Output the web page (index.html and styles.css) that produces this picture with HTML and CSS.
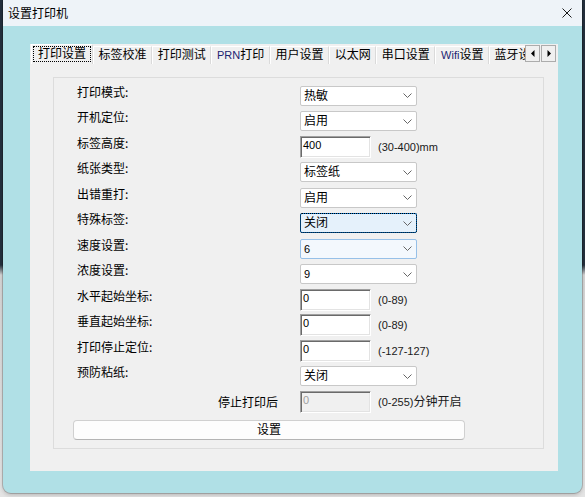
FILE: index.html
```html
<!DOCTYPE html>
<html lang="zh-CN">
<head>
<meta charset="utf-8">
<title>设置打印机</title>
<link rel="stylesheet" href="styles.css">
</head>
<body>
<div class="window">
  <div class="titlebar">
    <span class="title">设置打印机</span>
    <svg class="close" width="10" height="10" viewBox="0 0 10 10"><path d="M0.5 0.5L9.5 9.5M9.5 0.5L0.5 9.5" stroke="#1a1a1a" stroke-width="1" fill="none"/></svg>
  </div>
  <div class="client">
    <div class="tabctl">
      <div class="tabstrip">
        <div class="tabs">
          <div class="tab active"><span class="focus">打印设置</span></div>
          <div class="tab">标签校准</div>
          <div class="tab">打印测试</div>
          <div class="tab"><span class="lat">PRN</span>打印</div>
          <div class="tab">用户设置</div>
          <div class="tab">以太网</div>
          <div class="tab">串口设置</div>
          <div class="tab"><span class="lat">Wifi</span>设置</div>
          <div class="tab">蓝牙设置</div>
        </div>
        <div class="arrows">
          <span class="arr"><svg width="4" height="7" viewBox="0 0 4 7"><polygon points="3.5,0 0,3.5 3.5,7" fill="#000"/></svg></span>
          <span class="arr"><svg width="4" height="7" viewBox="0 0 4 7"><polygon points="0.5,0 4,3.5 0.5,7" fill="#000"/></svg></span>
        </div>
      </div>
      <div class="tabbody">
        <div class="group">
          <div class="row"><span class="lbl">打印模式:</span><div class="select"><span>热敏</span><svg class="chev" width="9" height="5" viewBox="0 0 9 5"><path d="M0.5 0.5L4.5 4.5L8.5 0.5" stroke="#666" fill="none"/></svg></div></div>
          <div class="row"><span class="lbl">开机定位:</span><div class="select"><span>启用</span><svg class="chev" width="9" height="5" viewBox="0 0 9 5"><path d="M0.5 0.5L4.5 4.5L8.5 0.5" stroke="#666" fill="none"/></svg></div></div>
          <div class="row"><span class="lbl">标签高度:</span><div class="input">400</div><span class="hint">(30-400)mm</span></div>
          <div class="row"><span class="lbl">纸张类型:</span><div class="select"><span>标签纸</span><svg class="chev" width="9" height="5" viewBox="0 0 9 5"><path d="M0.5 0.5L4.5 4.5L8.5 0.5" stroke="#666" fill="none"/></svg></div></div>
          <div class="row"><span class="lbl">出错重打:</span><div class="select"><span>启用</span><svg class="chev" width="9" height="5" viewBox="0 0 9 5"><path d="M0.5 0.5L4.5 4.5L8.5 0.5" stroke="#666" fill="none"/></svg></div></div>
          <div class="row"><span class="lbl">特殊标签:</span><div class="select focus"><span>关闭</span><svg class="chev" width="9" height="5" viewBox="0 0 9 5"><path d="M0.5 0.5L4.5 4.5L8.5 0.5" stroke="#666" fill="none"/></svg></div></div>
          <div class="row"><span class="lbl">速度设置:</span><div class="select hover"><span class="num">6</span><svg class="chev" width="9" height="5" viewBox="0 0 9 5"><path d="M0.5 0.5L4.5 4.5L8.5 0.5" stroke="#666" fill="none"/></svg></div></div>
          <div class="row"><span class="lbl">浓度设置:</span><div class="select"><span class="num">9</span><svg class="chev" width="9" height="5" viewBox="0 0 9 5"><path d="M0.5 0.5L4.5 4.5L8.5 0.5" stroke="#666" fill="none"/></svg></div></div>
          <div class="row"><span class="lbl">水平起始坐标:</span><div class="input">0</div><span class="hint">(0-89)</span></div>
          <div class="row"><span class="lbl">垂直起始坐标:</span><div class="input">0</div><span class="hint">(0-89)</span></div>
          <div class="row"><span class="lbl">打印停止定位:</span><div class="input">0</div><span class="hint">(-127-127)</span></div>
          <div class="row"><span class="lbl">预防粘纸:</span><div class="select"><span>关闭</span><svg class="chev" width="9" height="5" viewBox="0 0 9 5"><path d="M0.5 0.5L4.5 4.5L8.5 0.5" stroke="#666" fill="none"/></svg></div></div>
          <div class="row"><span class="lbl right">停止打印后</span><div class="input disabled">0</div><span class="hint">(0-255)<span class="cjk">分钟开启</span></span></div>
          <div class="btn">设置</div>
        </div>
      </div>
    </div>
  </div>
</div>
</body>
</html>
```
FILE: styles.css
```css
html, body {
  margin: 0;
  padding: 0;
}
body {
  width: 585px;
  height: 497px;
  overflow: hidden;
  background: linear-gradient(to bottom, #24303d 0, #24303d 265px, #d6d6d6 275px, #e4e4e4 100%);
  font-family: "Liberation Sans", "Noto Sans CJK SC", sans-serif;
  font-size: 12px;
  color: #000;
}
.window {
  margin-left: 3px;
  width: 579px;
  height: 493px;
  display: flex;
  flex-direction: column;
  background: #b0e0e6;
  border-radius: 0 0 8px 8px;
  box-shadow: 0 0 0 1px rgba(0, 0, 0, 0.18), 0 2px 4px rgba(0, 0, 0, 0.2);
  overflow: hidden;
}
.titlebar {
  flex: none;
  height: 26px;
  background: #eef3f8;
  display: flex;
  align-items: center;
  justify-content: space-between;
  padding: 0 10px 0 5px;
}
.title {
  font-size: 12px;
  line-height: 16px;
  font-family: "Noto Sans CJK SC", sans-serif;
}
.client {
  flex: 1;
  display: flex;
  padding: 18px 24px 22px 27px;
}
.tabctl {
  flex: 1;
  background: #f0f0f0;
  display: flex;
  flex-direction: column;
}
.tabstrip {
  flex: none;
  height: 20px;
  display: flex;
  padding-left: 1px;
}
.tabs {
  display: flex;
  align-items: flex-end;
  width: 494px;
  height: 20px;
  overflow: hidden;
}
.tab {
  flex: none;
  box-sizing: border-box;
  height: 18px;
  padding: 0 4.6px;
  border-top: 1px solid #fff;
  border-left: 1px solid #fff;
  border-right: 1px solid #dadada;
  line-height: 16px;
  white-space: nowrap;
  background: #f0f0f0;
}
.tab.active {
  height: 20px;
  padding: 1px 1px 0 1px;
  background: #f0f0f0;
}
.focus {
  display: inline-block;
  outline: 1px dotted #000;
  outline-offset: -1px;
  padding: 0 5px;
  line-height: 16px;
}
.lat {
  font-size: 11px;
  color: #1d2470;
}
.arrows {
  flex: none;
  display: flex;
  gap: 1px;
  margin-top: 1px;
  height: 17px;
}
.arr {
  box-sizing: border-box;
  width: 15px;
  height: 17px;
  border: 1px solid #acacac;
  background: #f0f0f0;
  display: flex;
  align-items: center;
  justify-content: center;
}
.tabbody {
  flex: 1;
  display: flex;
  padding: 13px 14px 22px 23px;
}
.group {
  flex: 1;
  display: flex;
  flex-direction: column;
  border: 1px solid #dcdcdc;
  padding: 5px 0 0 19px;
}
.row {
  display: grid;
  grid-template-columns: 223px max-content max-content;
  align-items: center;
  height: 25.5px;
  padding-left: 4px;
}
.lbl {
  line-height: 16px;
  margin-bottom: 8px;
  font-family: "Noto Sans CJK SC", sans-serif;
}
.lbl.right {
  text-align: right;
  padding-right: 22px;
  margin-bottom: 0;
}
.select {
  box-sizing: border-box;
  width: 117px;
  height: 20px;
  border: 1px solid #c8c8c8;
  border-radius: 2px;
  background: #fff;
  display: flex;
  align-items: center;
  justify-content: space-between;
  padding: 0 4px 0 3px;
  line-height: 16px;
}
.select.focus {
  background: #e5f1fb;
  border-color: #0078d7;
}
.select.hover {
  background: #f3f8fd;
  border-color: #96c0e8;
}
.num {
  font-size: 11px;
}
.input {
  box-sizing: border-box;
  width: 71px;
  height: 22px;
  border: 1px solid;
  border-color: #a0a0a0 #ffffff #ffffff #a0a0a0;
  box-shadow: inset 1px 1px 0 #6a6a6a, inset -1px -1px 0 #e3e3e3;
  background: #fff;
  padding: 1px 0 0 2px;
  font-size: 11px;
  line-height: 14px;
}
.input.disabled {
  background: #f0f0f0;
  color: #a0a0a0;
}
.hint {
  margin-left: 7px;
  font-size: 11px;
  line-height: 16px;
  color: #1a1a1a;
}
.cjk {
  font-size: 12px;
}
.btn {
  box-sizing: border-box;
  width: 392px;
  height: 20px;
  margin-top: 5.5px;
  border: 1px solid #d0d0d0;
  border-bottom-color: #b4b4b4;
  border-radius: 4px;
  background: #fdfdfd;
  text-align: center;
  line-height: 18px;
}
```
